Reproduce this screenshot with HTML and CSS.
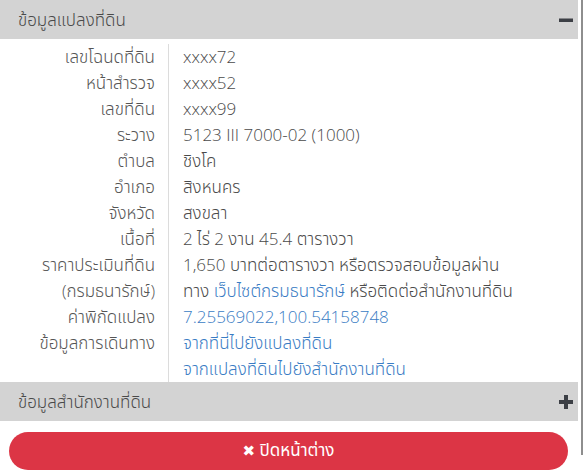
FILE: index.html
```html
<!DOCTYPE html>
<html lang="th">
<head>
<meta charset="utf-8">
<title>ข้อมูลแปลงที่ดิน</title>
<link rel="stylesheet" href="styles.css">
</head>
<body>
<div class="frame">
  <div class="panel">
    <div class="section-head">
      <span>ข้อมูลแปลงที่ดิน</span>
      <svg class="toggle" viewBox="0 0 14 14" width="14" height="14"><rect x="0" y="5.5" width="14" height="3.5" fill="#3c3f45"/></svg>
    </div>
    <div class="details">
      <div class="row"><div class="label">เลขโฉนดที่ดิน</div><div class="value">xxxx72</div></div>
      <div class="row"><div class="label">หน้าสำรวจ</div><div class="value">xxxx52</div></div>
      <div class="row"><div class="label">เลขที่ดิน</div><div class="value">xxxx99</div></div>
      <div class="row"><div class="label">ระวาง</div><div class="value">5123 III 7000-02 (1000)</div></div>
      <div class="row"><div class="label">ตำบล</div><div class="value">ชิงโค</div></div>
      <div class="row"><div class="label">อำเภอ</div><div class="value">สิงหนคร</div></div>
      <div class="row"><div class="label">จังหวัด</div><div class="value">สงขลา</div></div>
      <div class="row"><div class="label">เนื้อที่</div><div class="value">2 ไร่ 2 งาน 45.4 ตารางวา</div></div>
      <div class="row"><div class="label">ราคาประเมินที่ดิน<br>(กรมธนารักษ์)</div><div class="value">1,650 บาทต่อตารางวา หรือตรวจสอบข้อมูลผ่าน<br>ทาง <a href="#">เว็บไซต์กรมธนารักษ์</a> หรือติดต่อสำนักงานที่ดิน</div></div>
      <div class="row"><div class="label">ค่าพิกัดแปลง</div><div class="value"><a href="#">7.25569022,100.54158748</a></div></div>
      <div class="row"><div class="label">ข้อมูลการเดินทาง</div><div class="value"><a href="#">จากที่นี่ไปยังแปลงที่ดิน</a><br><a href="#">จากแปลงที่ดินไปยังสำนักงานที่ดิน</a></div></div>
    </div>
    <div class="section-head">
      <span>ข้อมูลสำนักงานที่ดิน</span>
      <svg class="toggle" viewBox="0 0 14 14" width="14" height="14"><path d="M5 0h4v5h5v4H9v5H5V9H0V5h5z" fill="#3c3f45"/></svg>
    </div>
    <div class="actions">
      <button class="close-btn" type="button"><span class="x">✖</span> ปิดหน้าต่าง</button>
    </div>
  </div>
  <div class="track"></div>
</div>
</body>
</html>
```

FILE: styles.css
```css
html, body {
  margin: 0;
  padding: 0;
  background: #fff;
}

body {
  font-family: "Open Sans", "Noto Sans Thai", "Noto Sans", sans-serif;
  font-size: 17px;
  font-weight: 300;
  color: #4a4a4a;
}

.frame {
  display: flex;
  width: 585px;
  height: 473px;
}

.panel {
  width: 578px;
  display: flex;
  flex-direction: column;
}

.track {
  width: 2px;
  height: 455px;
  margin-left: 3px;
  background: #8e8e8e;
}

.section-head {
  height: 39px;
  background: #d3d3d3;
  display: flex;
  align-items: center;
  justify-content: space-between;
  padding: 0 5px 0 18px;
  color: #4a4a4a;
  line-height: 1;
}

.toggle {
  display: block;
}

.details {
  padding: 5px 0 0;
}

.row {
  display: flex;
  line-height: 26px;
}

.label {
  width: 155px;
  text-align: right;
  padding-right: 13px;
  border-right: 1px solid #dcdcdc;
  color: #555;
}

.value {
  padding-left: 14px;
  color: #4a4a4a;
}

.value a {
  color: #3a7cc4;
  text-decoration: none;
}

.actions {
  padding: 11px 10px 0 9px;
}

.close-btn {
  width: 100%;
  height: 38px;
  border: none;
  border-radius: 19px;
  background: #dc3545;
  color: #fff;
  font-family: inherit;
  font-size: 17px;
  font-weight: 400;
  padding: 0;
}

.close-btn .x {
  font-family: "DejaVu Sans", sans-serif;
  font-size: 15px;
}
```
